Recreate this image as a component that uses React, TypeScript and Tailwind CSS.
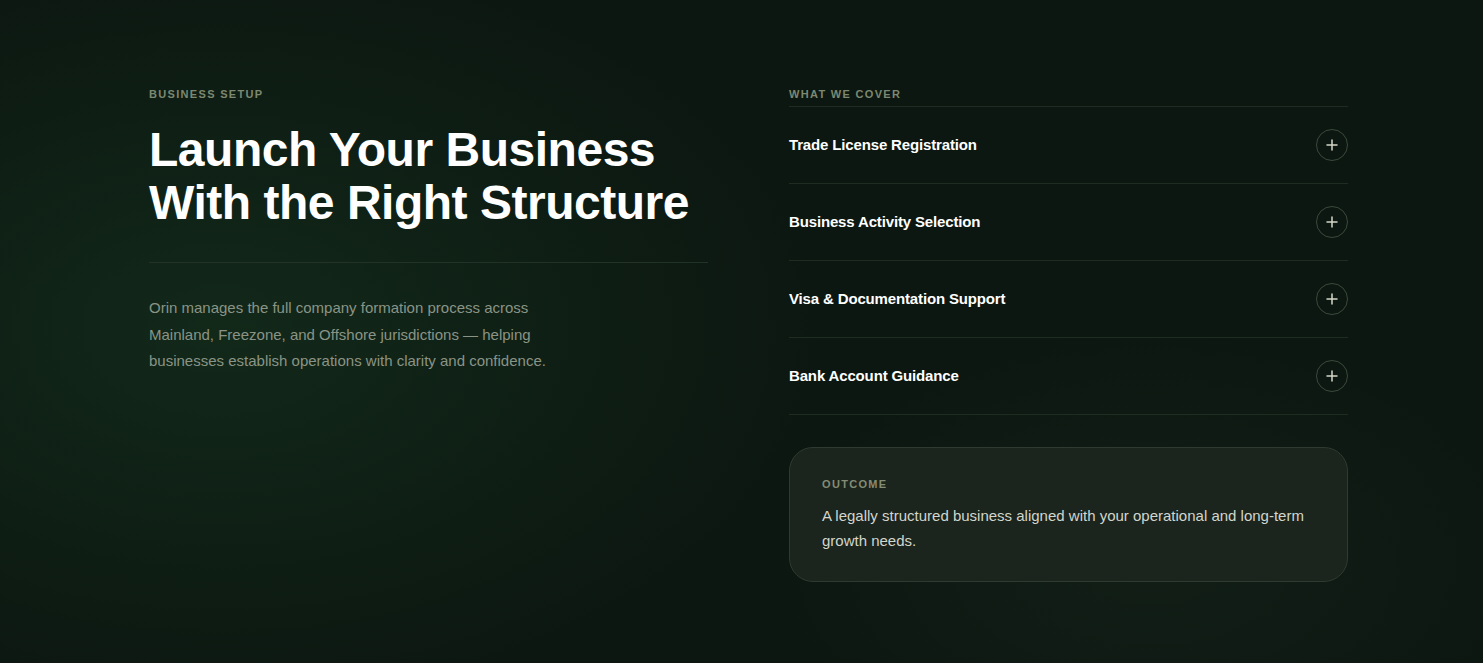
import React from "react";

const items = [
  "Trade License Registration",
  "Business Activity Selection",
  "Visa & Documentation Support",
  "Bank Account Guidance",
];

function Plus() {
  return (
    <svg width="12" height="12" viewBox="0 0 12 12" fill="none">
      <path d="M6 1v10M1 6h10" stroke="#d4d8c8" strokeWidth="1.5" strokeLinecap="round" />
    </svg>
  );
}

export default function App() {
  return (
    <div
      className="relative w-full h-[663px] overflow-hidden bg-[#0c1711]"
      style={{ fontFamily: '"Liberation Sans", Arial, sans-serif' }}
    >
      <div className="absolute inset-0 bg-[radial-gradient(ellipse_800px_500px_at_220px_330px,rgba(24,58,34,0.5),rgba(12,23,17,0)_75%)]" />
      <div className="absolute inset-0 bg-[radial-gradient(ellipse_500px_300px_at_1150px_560px,rgba(28,44,32,0.35),rgba(12,23,17,0)_75%)]" />
      <div className="relative pl-[149px] pt-[88px] grid grid-cols-[559px_559px] gap-x-[81px]">
        {/* Left */}
        <div>
          <div className="text-[11px] leading-[12px] font-bold tracking-[0.12em] text-[#7c8870] uppercase">
            Business Setup
          </div>
          <h1 className="mt-[23px] text-[48px] leading-[53px] font-bold text-white tracking-[-0.01em]">
            Launch Your Business
            <br />
            With the Right Structure
          </h1>
          <div className="mt-[33px] h-px bg-[#233226]" />
          <p className="mt-[32px] max-w-[420px] text-[15px] leading-[26.5px] text-[#8a9486]">
            Orin manages the full company formation process across Mainland, Freezone, and Offshore jurisdictions — helping businesses establish operations with clarity and confidence.
          </p>
        </div>

        {/* Right */}
        <div>
          <div className="text-[11px] leading-[12px] font-bold tracking-[0.12em] text-[#7c8870] uppercase">
            What We Cover
          </div>
          <div className="mt-[6px] border-t border-[#1f2c22]">
            {items.map((t) => (
              <div
                key={t}
                className="h-[77px] flex items-center justify-between border-b border-[#1f2c22]"
              >
                <span className="text-[15px] font-bold text-white tracking-[-0.01em]">{t}</span>
                <span className="w-[32px] h-[32px] rounded-full border border-[#3a4a3c] flex items-center justify-center">
                  <Plus />
                </span>
              </div>
            ))}
          </div>
          <div className="mt-[32px] h-[135px] rounded-[24px] border border-[#2f3b30] bg-[#1b241d] px-[32px] pt-[30px]">
            <div className="text-[11px] leading-[12px] font-bold tracking-[0.12em] text-[#848c74] uppercase">
              Outcome
            </div>
            <p className="mt-[13px] text-[15px] leading-[25px] text-[#d2d6cc]">
              A legally structured business aligned with your operational and long-term growth needs.
            </p>
          </div>
        </div>
      </div>
    </div>
  );
}
